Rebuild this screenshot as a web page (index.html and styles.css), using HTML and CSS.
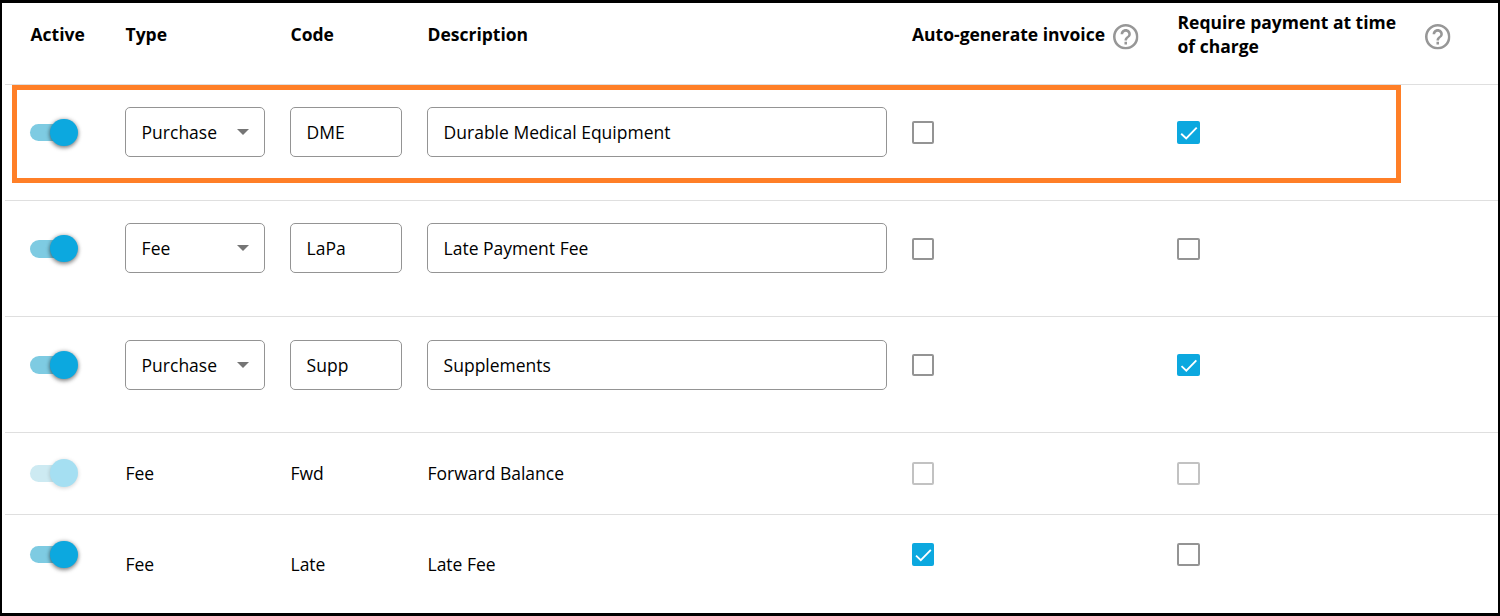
FILE: index.html
```html
<!DOCTYPE html>
<html lang="en">
<head>
<meta charset="utf-8">
<title>Charge types</title>
<link rel="stylesheet" href="styles.css">
</head>
<body>
<svg class="defs" width="0" height="0" aria-hidden="true">
  <symbol id="help" viewBox="2 2 20 20"><path d="M11 18h2v-2h-2v2zm1-16C6.480 2 2 6.480 2 12s4.480 10 10 10 10-4.480 10-10S17.520 2 12 2zm0 18c-4.410 0-8-3.590-8-8s3.590-8 8-8 8 3.590 8 8-3.590 8-8 8zm0-14c-2.210 0-4 1.790-4 4h2c0-1.100.9-2 2-2s2 .9 2 2c0 2-3 1.750-3 5h2c0-2.250 3-2.500 3-5 0-2.210-1.790-4-4-4z"/></symbol>
  <symbol id="tick" viewBox="0 0 23 23"><path d="M4.200 12.700L9.200 17.400L19.700 6.700"/></symbol>
</svg>
<main class="table">
  <div class="row head">
    <span class="title">Active</span>
    <span class="title">Type</span>
    <span class="title">Code</span>
    <span class="title">Description</span>
    <div class="title-help"><span class="title">Auto-generate invoice</span><svg class="help"><use href="#help"/></svg></div>
    <span class="title wrap">Require payment at time of charge</span>
    <svg class="help"><use href="#help"/></svg>
  </div>
  <div class="row edit highlighted">
    <div class="switch"><i class="thumb"></i></div>
    <div class="field select">Purchase<i class="caret"></i></div>
    <div class="field code">DME</div>
    <div class="field desc">Durable Medical Equipment</div>
    <div class="check"></div>
    <div class="check wide on"><svg><use href="#tick"/></svg></div>
  </div>
  <div class="row edit">
    <div class="switch"><i class="thumb"></i></div>
    <div class="field select">Fee<i class="caret"></i></div>
    <div class="field code">LaPa</div>
    <div class="field desc">Late Payment Fee</div>
    <div class="check lower"></div>
    <div class="check wide lower"></div>
  </div>
  <div class="row edit third">
    <div class="switch"><i class="thumb"></i></div>
    <div class="field select">Purchase<i class="caret"></i></div>
    <div class="field code">Supp</div>
    <div class="field desc">Supplements</div>
    <div class="check lower"></div>
    <div class="check wide lower on"><svg><use href="#tick"/></svg></div>
  </div>
  <div class="row plain disabled">
    <div class="switch"><i class="thumb"></i></div>
    <span class="text">Fee</span>
    <span class="text">Fwd</span>
    <span class="text">Forward Balance</span>
    <div class="check"></div>
    <div class="check wide"></div>
  </div>
  <div class="row plain last">
    <div class="switch"><i class="thumb"></i></div>
    <span class="text">Fee</span>
    <span class="text">Late</span>
    <span class="text">Late Fee</span>
    <div class="check on"><svg><use href="#tick"/></svg></div>
    <div class="check wide"></div>
  </div>
</main>
</body>
</html>
```
FILE: styles.css
```css
* { box-sizing: border-box; }
body {
  margin: 0;
  height: 616px;
  padding-left: 3px;
  border: solid #000;
  border-width: 3px 2px;
  background: #fff;
  color: #000;
  font: 17.5px/24px "Open Sans", sans-serif;
  overflow: hidden;
}
.defs { position: absolute; }
.row {
  display: grid;
  grid-template-columns: 95px 165px 137px 485px 265px 248px 1fr;
  align-items: start;
  height: 116px;
  padding-left: 25px;
  border-bottom: 1px solid #dfdfdf;
}
.head { height: 82px; }
.plain { height: 82px; }
.last { height: 98px; border-bottom: 0; }
.title { font-weight: 700; margin-top: 19px; padding-left: .5px; }
.title.wrap { margin-top: 7px; width: 232px; }
.title-help { display: flex; gap: 8px; }
.title-help .title { padding-left: 0; }
.help { width: 25.500px; height: 25.500px; fill: #979797; margin-top: 21px; }

.highlighted { position: relative; }
.highlighted::after {
  content: "";
  position: absolute;
  box-sizing: border-box;
  left: 7px;
  top: 0;
  width: 1389px;
  height: 98px;
  border: 5px solid #ff7f27;
}

.switch {
  width: 46px;
  height: 17px;
  margin-top: 39px;
  border-radius: 9px;
  background: #7ecbe2;
  display: flex;
  align-items: flex-start;
}
.thumb {
  flex: none;
  width: 28px;
  height: 27px;
  margin: -5px 0 0 20px;
  border-radius: 14px;
  background: #0ca8df;
  box-shadow: 0 2px 4px rgba(0,0,0,.4), 0 0 4px rgba(0,0,0,.25);
}
.edit:not(.highlighted) .switch { height: 18px; }
.third .thumb { height: 28px; }
.plain .switch { margin-top: 31px; }
.disabled .switch { margin-top: 32px; background: #cdeaf2; }
.disabled .thumb { height: 28px; margin-top: -6px; background: #a5dff2; box-shadow: 0 1px 4px rgba(0,0,0,.18); }

.field {
  display: flex;
  align-items: center;
  height: 50px;
  margin-top: 22px;
  padding: 0 16px 0 15.600px;
  border: 1px solid #949494;
  border-radius: 5px;
}
.third .field { margin-top: 23px; }
.select { width: 140px; justify-content: space-between; padding-right: 15px; }
.code { width: 112px; }
.desc { width: 460px; }
.caret {
  border: 6px solid transparent;
  border-top-color: #757575;
  border-bottom: 0;
}

.check {
  width: 22px;
  height: 23px;
  margin-top: 36px;
  border: 2px solid #949494;
  border-radius: 2px;
}
.check.wide { width: 23px; }
.check.lower { height: 22px; margin-top: 37px; }
.check.on { border: 0; background: #0ca8df; }
.check svg {
  display: block;
  width: 100%;
  height: 100%;
  fill: none;
  stroke: #fff;
  stroke-width: 1.9;
}
.plain .check { margin-top: 29px; }
.last .check { margin-top: 28px; }
.disabled .check { border-color: #c2c2c2; }
.text { margin-top: 28px; padding-left: .5px; }
.last .text { margin-top: 37px; }
```
